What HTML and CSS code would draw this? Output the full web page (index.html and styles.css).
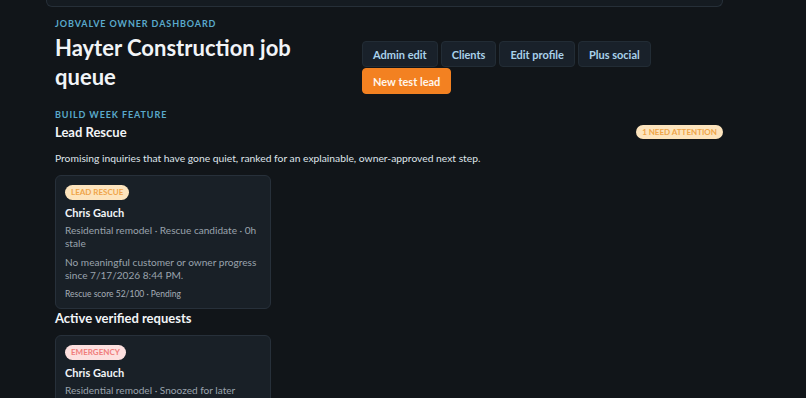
FILE: index.html
```html
<!DOCTYPE html>
<html lang="en">
<head>
  <meta charset="UTF-8" />
  <meta name="viewport" content="width=device-width, initial-scale=1.0"/>
  <title>JobValve Owner Dashboard</title>
  <link rel="stylesheet" href="styles.css">
</head>
<body>
  <main class="page">
    <div class="top-panel"></div>

    <header class="dash-header">
      <div class="title-block">
        <p class="eyebrow">JobValve owner dashboard</p>
        <h1>Hayter Construction job queue</h1>
      </div>
      <nav class="actions">
        <a class="btn">Admin edit</a>
        <a class="btn">Clients</a>
        <a class="btn">Edit profile</a>
        <a class="btn">Plus social</a>
        <a class="btn btn-primary">New test lead</a>
      </nav>
    </header>

    <section class="rescue">
      <p class="eyebrow">Build week feature</p>
      <div class="section-head">
        <h2>Lead Rescue</h2>
        <span class="pill pill-warn">1 need attention</span>
      </div>
      <p class="intro">Promising inquiries that have gone quiet, ranked for an explainable, owner-approved next step.</p>

      <div class="lead-card">
        <span class="pill pill-warn">Lead rescue</span>
        <h3>Chris Gauch</h3>
        <p class="meta">Residential remodel · Rescue candidate · 0h stale</p>
        <p class="meta">No meaningful customer or owner progress since 7/17/2026 8:44 PM.</p>
        <p class="small">Rescue score 52/100 · Pending</p>
      </div>
    </section>

    <section class="requests">
      <h2>Active verified requests</h2>
      <div class="lead-card">
        <span class="pill pill-danger">Emergency</span>
        <h3>Chris Gauch</h3>
        <p class="meta">Residential remodel · Snoozed for later</p>
        <p class="meta">Customer asked to follow up after the weekend.</p>
      </div>
    </section>
  </main>
</body>
</html>
```

FILE: styles.css
```css
body {
  font-family: 'Lato', 'Noto Sans', sans-serif;
  margin: 0;
  padding: 0;
  background-color: #111519;
  color: #e6ebf0;
  overflow: hidden;
}
.page {
  width: 668px;
  margin-left: 55px;
}
.top-panel {
  height: 6px;
  margin-left: -9px;
  border: 1px solid #262f38;
  border-top: none;
  border-radius: 0 0 6px 6px;
  background-color: #151b21;
}
p, h1, h2, h3 {
  margin: 0;
}
.eyebrow {
  font-size: 9px;
  line-height: 12px;
  font-weight: 700;
  letter-spacing: 0.9px;
  text-transform: uppercase;
  color: #5aa9cb;
}
.dash-header {
  display: flex;
  justify-content: space-between;
  margin-top: 11px;
}
.title-block h1 {
  width: 290px;
  margin-top: 3px;
  font-size: 22px;
  line-height: 29px;
  font-weight: 700;
  color: #f1f4f7;
}
.actions {
  width: 361px;
  display: flex;
  flex-wrap: wrap;
  align-content: flex-start;
  gap: 1px 3px;
  padding-top: 23px;
}
.btn {
  display: inline-block;
  padding: 0 10px;
  height: 26px;
  line-height: 26px;
  font-size: 11px;
  font-weight: 700;
  color: #a9d2ea;
  background-color: #19212a;
  border: 1px solid #222c35;
  border-radius: 4px;
  box-sizing: border-box;
}
.btn-primary {
  background-color: #f38121;
  border-color: #f38121;
  color: #fff6ec;
}
.rescue {
  margin-top: 15px;
}
.section-head {
  display: flex;
  justify-content: space-between;
  align-items: center;
  margin-top: 2px;
}
h2 {
  font-size: 13px;
  line-height: 18px;
  font-weight: 700;
  color: #f1f4f7;
}
.pill {
  display: inline-block;
  padding: 0 6px;
  height: 14px;
  line-height: 14px;
  border-radius: 8px;
  font-size: 8px;
  font-weight: 700;
  text-transform: uppercase;
}
.pill-warn {
  background-color: #fde4bd;
  color: #efa54a;
}
.pill-danger {
  background-color: #fde0df;
  color: #f07d7b;
}
.intro {
  margin-top: 10px;
  font-size: 10.3px;
  line-height: 14px;
  color: #dfe4ea;
}
.lead-card {
  width: 216px;
  box-sizing: border-box;
  display: flex;
  flex-direction: column;
  align-items: flex-start;
  margin-top: 10px;
  padding: 9px 9px 8px;
  background-color: #192027;
  border: 1px solid #27303a;
  border-radius: 6px;
}
.lead-card .pill {
  height: 15px;
  line-height: 15px;
}
.lead-card h3 {
  margin-top: 6px;
  font-size: 11px;
  line-height: 14px;
  font-weight: 700;
  color: #f1f4f7;
}
.meta {
  margin-top: 4px;
  font-size: 10.1px;
  line-height: 13px;
  color: #9aa3ad;
}
.meta + .meta {
  margin-top: 6px;
}
.small {
  margin-top: 6px;
  font-size: 8.5px;
  line-height: 12px;
  color: #a6aeb7;
}
.requests {
  margin-top: 0;
}
.requests .lead-card {
  margin-top: 8px;
}
```
